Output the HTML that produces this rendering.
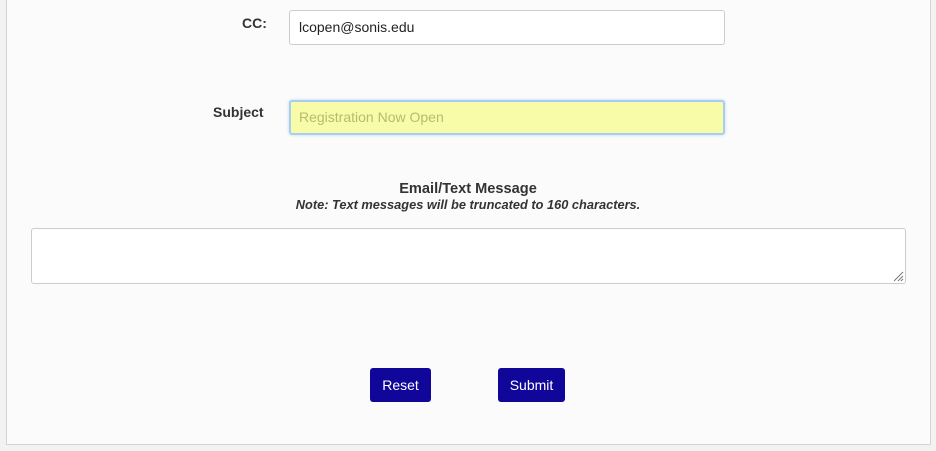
<!DOCTYPE html>
<html><head><meta charset="utf-8"><style>
*{box-sizing:border-box}
body{margin:0;width:936px;height:451px;background:#f2f2f2;font-family:"Liberation Sans",Arial,sans-serif;position:relative;overflow:hidden}
.panel{position:absolute;left:6px;top:-2px;width:925px;height:447px;background:#fbfbfb;border:1px solid #d4d4d4}
.lbl{position:absolute;font-weight:bold;font-size:14px;color:#333}
.inp{position:absolute;left:289px;width:436px;height:35px;border:1px solid #ccc;border-radius:3px;background:#fff;font-size:14px;padding:8px 9px;color:#222}
.subj{background:#f8fca8;border:2px solid #a8cdf2;color:#b2bd6e;padding:7px 8px;box-shadow:0 0 3px #bcd8f6}
.ta{position:absolute;left:31px;top:228px;width:875px;height:56px;border:1px solid #ccc;border-radius:3px;background:#fff}
.btn{position:absolute;top:368px;height:34px;background:#10069a;color:#fff;border-radius:3px;font-size:14px;text-align:center;line-height:34px}
</style></head><body>
<div class="panel"></div>
<div class="lbl" style="left:242px;top:15px">CC:</div>
<div class="inp" style="top:10px">lcopen@sonis.edu</div>
<div class="lbl" style="left:213px;top:104px">Subject</div>
<div class="inp subj" style="top:100px">Registration Now Open</div>
<div style="position:absolute;left:0;width:936px;top:181px;text-align:center;font-weight:bold;font-size:14.6px;color:#333">Email/Text Message</div>
<div style="position:absolute;left:0;width:936px;top:197px;text-align:center;font-weight:bold;font-style:italic;font-size:12.8px;color:#333">Note: Text messages will be truncated to 160 characters.</div>
<div class="ta"><svg style="position:absolute;right:1px;bottom:1px" width="12" height="12"><path d="M11 2L2 11M11 6L6 11M11 9L9 11" stroke="#777" stroke-width="1"/></svg></div>
<div class="btn" style="left:370px;width:61px">Reset</div>
<div class="btn" style="left:498px;width:67px">Submit</div>
</body></html>
